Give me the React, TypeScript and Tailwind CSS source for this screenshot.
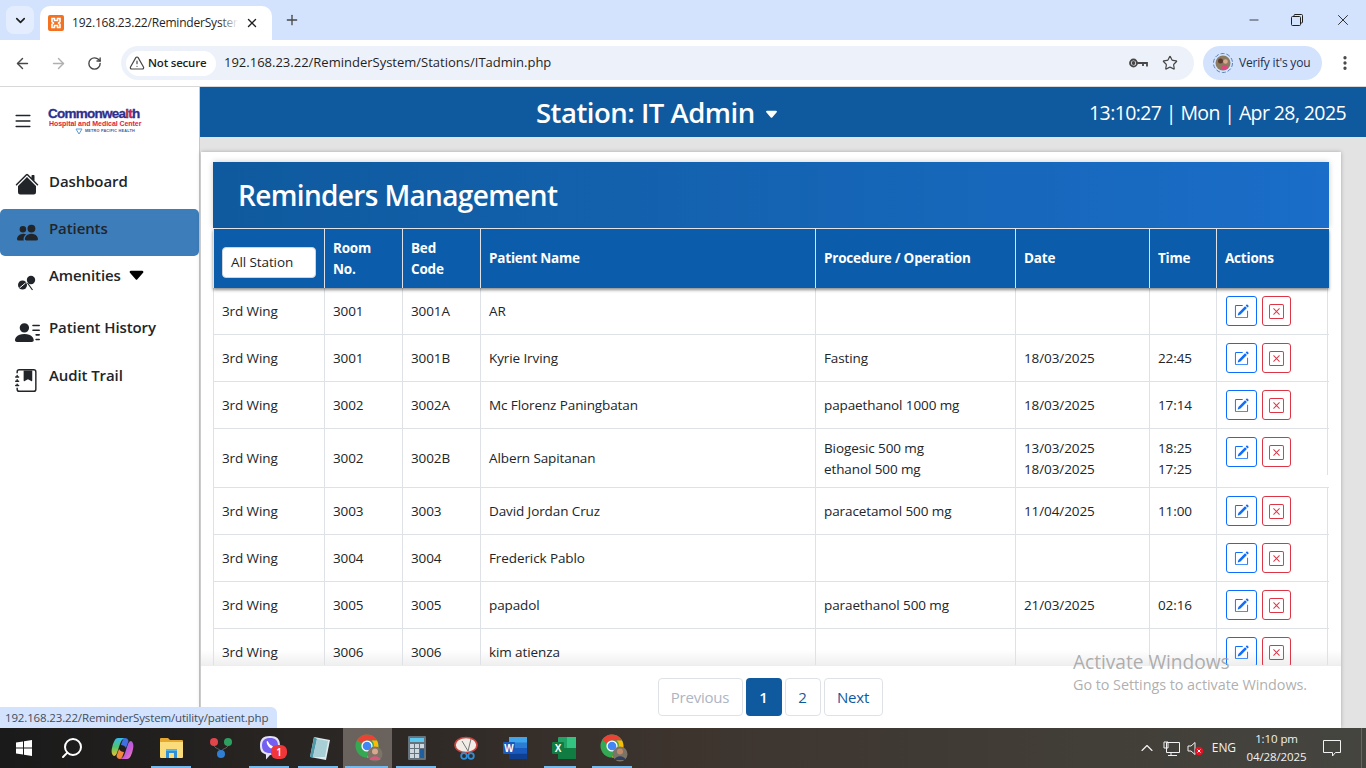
import React from "react";
import { ArrowLeft, ArrowRight, RotateCw, Star, Plus, X, ChevronDown, ChevronUp, Minus, EllipsisVertical, TriangleAlert, Search } from "lucide-react";
import { BsHouseFill, BsPeopleFill, BsPersonLinesFill, BsJournalBookmarkFill, BsCaretDownFill, BsPencilSquare, BsXSquare, BsList } from "react-icons/bs";

const font = { fontFamily: '"Open Sans","Noto Sans",sans-serif' };

type Row = { st: string; room: string; bed: string; name: string; proc: string[]; date: string[]; time: string[]; tall?: boolean };
const rows: Row[] = [
  { st: "3rd Wing", room: "3001", bed: "3001A", name: "AR", proc: [], date: [], time: [] },
  { st: "3rd Wing", room: "3001", bed: "3001B", name: "Kyrie Irving", proc: ["Fasting"], date: ["18/03/2025"], time: ["22:45"] },
  { st: "3rd Wing", room: "3002", bed: "3002A", name: "Mc Florenz Paningbatan", proc: ["papaethanol 1000 mg"], date: ["18/03/2025"], time: ["17:14"] },
  { st: "3rd Wing", room: "3002", bed: "3002B", name: "Albern Sapitanan", proc: ["Biogesic 500 mg", "ethanol 500 mg"], date: ["13/03/2025", "18/03/2025"], time: ["18:25", "17:25"], tall: true },
  { st: "3rd Wing", room: "3003", bed: "3003", name: "David Jordan Cruz", proc: ["paracetamol 500 mg"], date: ["11/04/2025"], time: ["11:00"] },
  { st: "3rd Wing", room: "3004", bed: "3004", name: "Frederick Pablo", proc: [], date: [], time: [] },
  { st: "3rd Wing", room: "3005", bed: "3005", name: "papadol", proc: ["paraethanol 500 mg"], date: ["21/03/2025"], time: ["02:16"] },
  { st: "3rd Wing", room: "3006", bed: "3006", name: "kim atienza", proc: [], date: [], time: [] },
];

function Cell({ w, children }: { w: string; children?: React.ReactNode }) {
  return <div className={`${w} shrink-0 flex flex-col justify-center pl-2 border-r border-[#dee2e6] text-[13.5px] leading-[21px] text-[#212529] tracking-[-0.1px]`}>{children}</div>;
}

function Lines({ items, tall }: { items: string[]; tall?: boolean }) {
  return <div className={tall ? "pt-[2px]" : ""}>{items.map((p) => <div key={p}>{p}</div>)}</div>;
}

function TableRow({ r }: { r: Row }) {
  return (
    <div className={`flex ${r.tall ? "h-[59px]" : "h-[47px]"} border-b border-[#dee2e6]`}>
      <Cell w="w-[111px]">{r.st}</Cell>
      <Cell w="w-[78px]">{r.room}</Cell>
      <Cell w="w-[78px]">{r.bed}</Cell>
      <Cell w="w-[335px]">{r.name}</Cell>
      <Cell w="w-[200px]"><Lines items={r.proc} tall={r.tall} /></Cell>
      <Cell w="w-[134px]"><Lines items={r.date} tall={r.tall} /></Cell>
      <Cell w="w-[67px]"><Lines items={r.time} tall={r.tall} /></Cell>
      <div className="w-[112px] h-[46px] shrink-0 flex items-start gap-[5px] pt-[8px] pl-[9px] border-l border-r border-[#dee2e6] -ml-px">
        <button className="w-[31px] h-[30px] flex items-center justify-center rounded-[3px] border border-[#0d6efd] text-[#0d6efd]"><BsPencilSquare size={15} className="mt-[1px]" /></button>
        <button className="w-[29px] h-[30px] flex items-center justify-center rounded-[3px] border border-[#dc3545] text-[#dc3545]"><BsXSquare size={15} className="mt-[1px]" /></button>
      </div>
    </div>
  );
}

function Th({ w, children }: { w: string; children: React.ReactNode }) {
  return <div className={`${w} shrink-0 flex items-center pl-2 border-r border-[#dee2e6] text-[13.5px] leading-[21px] font-bold text-white tracking-[-0.2px]`}>{children}</div>;
}

function NavItem({ icon, label, active, extra, h, labelCls = "-mt-[9px]" }: { icon: React.ReactNode; label: string; active?: boolean; extra?: React.ReactNode; h: string; labelCls?: string }) {
  return (
    <div className={`${h} flex items-center pl-[15px] ${active ? "bg-[#3d7dba] rounded-[5px]" : ""}`}>
      <span className="w-[34px] shrink-0 flex items-center text-[#212529]">{icon}</span>
      <span className={`${labelCls} text-[15px] font-semibold text-[#212529] tracking-[-0.1px]`}>{label}</span>
      {extra}
    </div>
  );
}

function TaskIcon({ children, bar, active, barCls = "left-[4px] w-[40px]" }: { children: React.ReactNode; bar?: boolean; active?: boolean; barCls?: string }) {
  return (
    <div className={`relative w-[49px] h-full flex items-center justify-center ${active ? "bg-[#6a625c]" : ""}`}>
      {children}
      {bar && <div className={`absolute bottom-0 h-[2px] ${barCls} bg-[#76b9ed]`} />}
    </div>
  );
}

function ChromeIcon({ skin, top }: { skin: string; top: string }) {
  return (
    <svg width="28" height="28" viewBox="0 0 28 28" className="ml-[3px]">
      <circle cx="12" cy="12" r="11.500" fill="#34a853" />
      <path d="M12 .5A11.500 11.500 0 0 1 22 6.500H12a5.500 5.500 0 0 0-5 3.200L2.300 6A11.500 11.500 0 0 1 12 .5z" fill="#ea4335" />
      <path d="M22 6.500A11.500 11.500 0 0 1 12 23.500l4.700-8.200a5.500 5.500 0 0 0 0-8.800z" fill="#fbbc04" />
      <circle cx="12" cy="12" r="5.600" fill="#fff" />
      <circle cx="12" cy="12" r="4.300" fill="#4285f4" />
      <circle cx="20" cy="20" r="7.500" fill="#7d7468" />
      <circle cx="20" cy="17.500" r="3" fill={skin} />
      <path d="M14.500 26c1-5 10-5 11 0z" fill={top} />
    </svg>
  );
}

export default function App() {
  return (
    <div style={font} className="relative w-[1366px] h-[768px] overflow-hidden flex flex-col bg-white">
      {/* Tab strip */}
      <div className="h-[40px] shrink-0 bg-[#d3e3fd] flex items-end">
        <div className="w-[6px]" />
        <div className="self-start mt-[6px] w-[28px] h-[28px] rounded-[8px] bg-[#e4edfd] flex items-center justify-center"><ChevronDown size={15} strokeWidth={2.6} className="text-[#1f1f1f]" /></div>
        <div className="ml-[6px] w-[232px] h-[34px] bg-white rounded-t-[10px] flex items-center pl-[8px]">
          <svg width="16" height="16" viewBox="0 0 16 16"><rect width="16" height="16" rx="2" fill="#f4711f" /><path d="M4 3.500h2.500v2h3v-2H12v3.200l-1.400 1.300L12 9.300v3.200H9.500v-2h-3v2H4V9.300L5.400 8 4 6.700z" fill="none" stroke="#fff" strokeWidth="1.600" /></svg>
          <div className="relative ml-[8px] w-[166px] overflow-hidden whitespace-nowrap text-[12px] text-[#1f1f1f] tracking-[-0.2px]">
            192.168.23.22/ReminderSystem
            <div className="absolute right-0 top-0 bottom-0 w-[18px] bg-gradient-to-r from-transparent to-white" />
          </div>
          <X size={14} strokeWidth={2.4} className="ml-[7px] text-[#1f1f1f]" />
        </div>
        <Plus size={16} strokeWidth={2} className="self-center ml-[12px] text-[#474747]" />
        <div className="flex-1" />
        <div className="self-start h-[40px] flex items-center text-[#1f1f1f]">
          <Minus size={14} strokeWidth={1.4} className="mr-[30px]" />
          <svg width="12" height="12" viewBox="0 0 12 12" className="mr-[31px]" fill="none" stroke="#1f1f1f"><rect x=".5" y="2.500" width="9" height="9" rx="1" /><path d="M3 2.500V1.500a1 1 0 0 1 1-1h6.500a1 1 0 0 1 1 1V8a1 1 0 0 1-1 1H9.500" /></svg>
          <X size={18} strokeWidth={1.2} className="mr-[14px]" />
        </div>
      </div>
      {/* Toolbar */}
      <div className="h-[47px] shrink-0 bg-white border-b border-[#d8d8d8] flex items-center">
        <ArrowLeft size={17} strokeWidth={2} className="ml-[14px] text-[#474747]" />
        <ArrowRight size={17} strokeWidth={2} className="ml-[19px] text-[#b0b0b0]" />
        <RotateCw size={15} strokeWidth={2.2} className="ml-[20px] text-[#474747]" />
        <div className="ml-[19px] w-[1073px] h-[34px] rounded-full bg-[#edf2fa] flex items-center pl-[5px]">
          <div className="h-[25px] w-[90px] rounded-full bg-white flex items-center pl-[3px] gap-[3px] text-[11.5px] font-semibold text-[#1f1f1f] tracking-[-0.2px] whitespace-nowrap">
            <TriangleAlert size={16} strokeWidth={1.8} className="text-[#474747]" />Not secure
          </div>
          <span className="ml-[8px] text-[13px] text-[#1f1f1f]">192.168.23.22/ReminderSystem/Stations/ITadmin.php</span>
          <div className="flex-1" />
          <svg width="19" height="12" viewBox="0 0 19 12" fill="none" stroke="#474747" strokeWidth="1.800"><circle cx="4.500" cy="6" r="3.500" /><path d="M8 6h10v3.500M14 6v3" /><circle cx="4.500" cy="6" r="1" fill="#474747" /></svg>
          <Star size={16} strokeWidth={1.8} className="ml-[14px] mr-[16px] text-[#474747]" />
        </div>
        <div className="ml-[9px] w-[119px] h-[34px] rounded-full bg-[#d3e3fd] flex items-center pl-[10px]">
          <svg width="20" height="20" viewBox="0 0 20 20"><circle cx="10" cy="10" r="9.500" fill="none" stroke="#5b7fb8" strokeDasharray="4 2" /><circle cx="10" cy="10" r="7.500" fill="#8a7a60" /><circle cx="7.500" cy="8" r="2.500" fill="#5b3a30" /><circle cx="12.500" cy="8.500" r="2.300" fill="#d6a88c" /><path d="M9 17v-5h5v4z" fill="#d9487c" /></svg>
          <span className="ml-[6px] text-[12px] text-[#1f2f4f] tracking-[-0.2px]">Verify it's you</span>
        </div>
        <EllipsisVertical size={18} strokeWidth={2.4} className="ml-[14px] text-[#474747]" />
      </div>
      {/* Body */}
      <div className="flex-1 flex min-h-0">
        <aside className="w-[200px] shrink-0 bg-white border-r border-[#c8c8c8]">
          <div className="h-[70px] flex items-center pl-[12px]">
            <BsList size={22} className="text-[#212529] shrink-0 -mt-[2px]" />
            <div className="ml-[14px] -mt-[1px] flex flex-col items-start" style={{ fontFamily: '"Liberation Sans",sans-serif' }}>
              <span className="text-[13.5px] leading-[12px] font-bold text-[#2e2f8f] tracking-[-0.75px] whitespace-nowrap" style={{ WebkitTextStroke: "0.3px #2e2f8f" }}>Commonwea<span className="text-[#e0233c]">lt</span>h</span>
              <span className="ml-[1px] text-[7px] leading-[7px] font-bold text-[#e0233c] tracking-[-0.05px] whitespace-nowrap">Hospital and Medical Center</span>
              <div className="ml-[27px] flex items-center gap-[2px] h-[8px]">
                <svg width="8" height="7" viewBox="0 0 8 7" fill="none" stroke="#5aa0d8"><path d="M1 1h6L4 6z" /></svg>
                <span className="text-[3.800px] leading-[7px] font-bold text-[#3a5a9a] whitespace-nowrap tracking-[0.2px]">METRO PACIFIC HEALTH</span>
              </div>
            </div>
          </div>
          <NavItem h="h-[52px]" labelCls="-mt-[3px]" icon={<BsHouseFill size={24} className="mt-[2px]" />} label="Dashboard" />
          <NavItem h="h-[47px]" active icon={<BsPeopleFill size={21} className="ml-[2px]" />} label="Patients" />
          <NavItem h="h-[47px]" icon={
            <svg width="20" height="16" viewBox="0 0 20 16" className="ml-[2px] mt-[6px]">
              <circle cx="14" cy="5" r="4.200" fill="#212529" />
              <circle cx="5.500" cy="10" r="4.500" fill="#212529" />
              <path d="M2.500 13l6-5M10 8.500l4 6" stroke="#fff" strokeWidth="1" />
              <path d="M10.500 8l5 7" stroke="#212529" strokeWidth="1.200" />
            </svg>
          } label="Amenities" extra={<BsCaretDownFill size={19} className="ml-[6px] -mt-[8px]" />} />
          <NavItem h="h-[58px]" icon={<BsPersonLinesFill size={25} />} label="Patient History" />
          <NavItem h="h-[38px]" icon={<BsJournalBookmarkFill size={23} />} label="Audit Trail" />
        </aside>
        <main className="flex-1 min-w-0 bg-[#e3e3e3] flex flex-col">
          <header className="h-[50px] shrink-0 bg-[#0f5a9e] flex items-center text-white">
            <div className="ml-[336px] flex items-center mt-[2px]">
              <span className="text-[27.5px] font-semibold tracking-[-0.5px] whitespace-nowrap">Station: IT Admin</span>
              <BsCaretDownFill size={15} className="ml-[9px] mt-[2px]" />
            </div>
            <span className="ml-auto mr-[20px] mt-[2px] text-[19.5px] tracking-[-0.6px] whitespace-nowrap">13:10:27 | Mon | Apr 28, 2025</span>
          </header>
          <div className="flex-1 min-h-0 mt-[15px] ml-[1px] mr-[25px] bg-white shadow-[0_0_4px_rgba(0,0,0,0.25)] flex flex-col">
            <div className="flex-1 min-h-0 pt-[10px] pl-[12px] pr-[12px] overflow-hidden relative">
              <div className="h-[66px] bg-gradient-to-r from-[#0f5a9e] to-[#1a6dc8] flex items-center pl-[25px] shadow-[0_0_6px_rgba(0,0,0,0.2)]">
                <h1 className="text-[28px] font-semibold text-white tracking-[-0.65px]">Reminders Management</h1>
              </div>
              <div className="mt-px h-[59px] flex bg-[#0b5cab] shadow-[0_2px_3px_rgba(0,0,0,0.45)] border-l border-[#dee2e6] relative z-20">
                <div className="w-[111px] shrink-0 flex items-center pl-[8px] pt-[7px] border-r border-[#dee2e6]">
                  <div className="w-[94px] h-[31px] bg-white rounded-[4px] border border-[#ced4da] flex items-center pl-[8px] text-[13.5px] text-[#212529] tracking-[-0.1px]">All Station</div>
                </div>
                <Th w="w-[78px]"><span>Room<br />No.</span></Th>
                <Th w="w-[78px]"><span>Bed<br />Code</span></Th>
                <Th w="w-[335px]">Patient Name</Th>
                <Th w="w-[200px]">Procedure / Operation</Th>
                <Th w="w-[134px]">Date</Th>
                <Th w="w-[67px]">Time</Th>
                <div className="flex-1 flex items-center pl-2 text-[13.5px] font-bold text-white tracking-[-0.2px]">Actions</div>
              </div>
              <div className="relative z-10 border-l border-[#dee2e6]">
                {rows.map((r) => <TableRow key={r.name} r={r} />)}
              </div>
            </div>
            <footer className="h-[63px] shrink-0 bg-white border-t border-[#dcdcdc] flex items-start justify-center pt-[12px] pr-[2px] relative">
              <div className="absolute z-0 left-0 right-0 -top-[16px] h-[16px] bg-gradient-to-b from-transparent to-[#eeeeee]" />
              <div className="flex gap-[3px] text-[15px]">
                <div className="w-[85px] h-[38px] border border-[#dee2e6] rounded-[4px] flex items-center justify-center text-[#adb5c2] tracking-[-0.2px]">Previous</div>
                <div className="w-[36px] h-[38px] bg-[#0f5a9e] rounded-[4px] flex items-center justify-center text-white font-semibold">1</div>
                <div className="w-[36px] h-[38px] border border-[#dee2e6] rounded-[4px] flex items-center justify-center text-[#0f5a9e]">2</div>
                <div className="w-[59px] h-[38px] border border-[#dee2e6] rounded-[4px] flex items-center justify-center text-[#0f5a9e] tracking-[-0.2px]">Next</div>
              </div>
            </footer>
          </div>
        </main>
      </div>
      {/* Taskbar */}
      <div className="h-[40px] shrink-0 bg-gradient-to-r from-[#1a1a1a] via-[#3d342e] to-[#45453f] flex items-stretch text-white">
        <div className="w-[47px] flex items-center justify-center">
          <svg width="16" height="16" viewBox="0 0 16 16" fill="#fff"><path d="M0 2.500l7-1v6H0zM8 1.300L16 0v7.500H8zM0 8.500h7v6l-7-1zM8 8.500h8V16l-8-1.300z" /></svg>
        </div>
        <div className="w-[49px] flex items-center justify-center"><Search size={24} strokeWidth={2} className="-scale-x-100" /></div>
        <div className="w-[2px]" />
        <TaskIcon>
          <svg width="23" height="23" viewBox="0 0 23 23">
            <defs>
              <linearGradient id="cp1" x1="0" y1="0" x2="0" y2="1"><stop offset="0" stopColor="#35b8ee" /><stop offset=".5" stopColor="#4fc46a" /><stop offset="1" stopColor="#f4c22e" /></linearGradient>
              <linearGradient id="cp2" x1="0" y1="0" x2="1" y2="1"><stop offset="0" stopColor="#7a6cf0" /><stop offset=".6" stopColor="#c95ad6" /><stop offset="1" stopColor="#f08ab0" /></linearGradient>
            </defs>
            <path d="M7 1h7c-3 1-4 3-5 6l-3 9c-.7 2-2 3-3 3-2-1-3-4-2-8 1-5 3-10 6-10z" fill="url(#cp1)" />
            <path d="M16 22H9c3-1 4-3 5-6l3-9c.7-2 2-3 3-3 2 1 3 4 2 8-1 5-3 10-6 10z" fill="url(#cp2)" />
            <path d="M14 1c2 0 3 1 3.500 3L15 11c-1-2-3-3-5-3 1-3 2-7 4-7z" fill="#3f6fe0" />
            <path d="M9 22c-2 0-3-1-3.500-3L8 12c1 2 3 3 5 3-1 3-2 7-4 7z" fill="#f2873c" />
          </svg>
        </TaskIcon>
        <TaskIcon bar>
          <svg width="23" height="20" viewBox="0 0 23 20"><path d="M0 1a1 1 0 0 1 1-1h7l2 2h12a1 1 0 0 1 1 1v16H0z" fill="#e6a82e" /><path d="M0 4h23v15a1 1 0 0 1-1 1H1a1 1 0 0 1-1-1z" fill="#fbdc7a" /><path d="M6 11h11v9h-3v-5H9v5H6z" fill="#2f8fd6" /><path d="M6 11h11v2H6z" fill="#56b4ea" /></svg>
        </TaskIcon>
        <TaskIcon>
          <svg width="24" height="22" viewBox="0 0 24 22"><path d="M5 8c0 4 7 3 7 8M19 8c0 4-7 3-7 8" stroke="#666" fill="none" /><circle cx="5" cy="5" r="4" fill="#e2454a" /><circle cx="19" cy="5" r="4" fill="#2da060" /><circle cx="12" cy="17" r="4" fill="#2f7fd6" /></svg>
        </TaskIcon>
        <TaskIcon bar>
          <svg width="24" height="26" viewBox="0 0 24 26"><path d="M12 1c7 0 10 3 10 9.500S19 20 12 20l-4 4.500V19.500C3 18 2 15 2 10.500 2 4 5 1 12 1z" fill="#e7e3f7" /><path d="M12 3c5.500 0 8 2.500 8 7.500S17.500 18 12 18c-5.500 0-8-2.500-8-7.500S6.500 3 12 3z" fill="#7360f2" /><path d="M9 6c1.500 0 1.500 2 2.500 3s2 1.500 3.500 2.500c0 2-2 2.500-3.500 1S8 8 9 6z" fill="#fff" /></svg>
          <span className="absolute left-[26px] top-[17px] w-[16px] h-[14px] rounded-[6px] bg-[#f0353b] text-[10px] leading-[14px] text-center font-semibold">1</span>
        </TaskIcon>
        <TaskIcon bar>
          <svg width="24" height="24" viewBox="0 0 24 24"><path d="M7 1l16 3-4 20-16-3z" fill="#dfe9ee" /><path d="M7 1l3 2-4 18-3 0z" fill="#4f9aa8" /><path d="M10 3l11 2-3 16L6 21z" fill="#a8cfd6" /></svg>
        </TaskIcon>
        <TaskIcon bar active barCls="left-[2px] w-[43px]"><ChromeIcon skin="#d6a88c" top="#d9587c" /></TaskIcon>
        <TaskIcon bar>
          <svg width="18" height="24" viewBox="0 0 18 24"><rect width="18" height="24" rx="1" fill="#66727c" /><rect x="2" y="2" width="14" height="4" fill="#5cc8ee" /><path d="M2 8h4v4H2zM7 8h4v4H7zM2 13h4v4H2zM7 13h4v4H7zM2 18h4v4H2zM7 18h4v4H7z" fill="#cfd8de" /><rect x="12" y="8" width="4" height="4" fill="#cfd8de" /><rect x="12" y="13" width="4" height="9" fill="#1f5f9e" /></svg>
        </TaskIcon>
        <TaskIcon>
          <svg width="24" height="24" viewBox="0 0 24 24"><ellipse cx="12" cy="9" rx="11" ry="7.500" fill="#f1ece6" stroke="#c9433f" strokeWidth="1.600" /><path d="M8 5l6 10M17 3l-3 12" stroke="#777" strokeWidth="1" /><circle cx="17" cy="20" r="2.800" fill="none" stroke="#2f8fd6" strokeWidth="1.800" /><circle cx="10" cy="20" r="2.800" fill="none" stroke="#2f8fd6" strokeWidth="1.800" /></svg>
        </TaskIcon>
        <TaskIcon>
          <svg width="24" height="22" viewBox="0 0 24 22"><rect x="6" width="18" height="22" rx="1" fill="#2b7cd3" /><rect x="6" width="18" height="5.500" fill="#41a5ee" /><rect x="6" y="11" width="18" height="5.500" fill="#185abd" /><rect x="6" y="16.500" width="18" height="5.500" fill="#103f91" /><rect y="5" width="12" height="12" rx="1" fill="#185abd" /><text x="6" y="14.500" textAnchor="middle" fontSize="10" fontWeight="700" fill="#fff" fontFamily="Liberation Sans">W</text></svg>
        </TaskIcon>
        <TaskIcon bar barCls="left-[5px] w-[32px]">
          <svg width="24" height="22" viewBox="0 0 24 22"><rect x="6" width="18" height="22" rx="1" fill="#21a366" /><rect x="6" y="11" width="18" height="11" fill="#107c41" /><rect x="15" width="9" height="11" fill="#33c481" /><rect y="5" width="12" height="12" rx="1" fill="#107c41" /><text x="6" y="14.500" textAnchor="middle" fontSize="10" fontWeight="700" fill="#fff" fontFamily="Liberation Sans">X</text></svg>
        </TaskIcon>
        <TaskIcon bar><ChromeIcon skin="#c08a68" top="#2f3f5f" /></TaskIcon>
        <div className="flex-1" />
        <div className="flex items-center text-[#f2f2f2]">
          <ChevronUp size={20} strokeWidth={1.4} className="mr-[6px]" />
          <svg width="17" height="15" viewBox="0 0 17 15" fill="none" stroke="#f2f2f2" className="mr-[7px]"><path d="M3.500 1.500h13v10h-13zM1 1h4v6H1zM8 11.500v2.500M5 14.500h9" /></svg>
          <svg width="18" height="15" viewBox="0 0 18 15" className="mr-[7px]"><path d="M1 5h3l4-3.500v12L4 10H1z" fill="none" stroke="#f2f2f2" /><circle cx="12" cy="10" r="4.200" fill="#e81123" /><path d="M10.500 8.500l3 3m0-3l-3 3" stroke="#fff" /></svg>
          <span className="text-[12px] mr-[5px] tracking-[-0.1px]">ENG</span>
          <div className="w-[71px] text-center text-[11.5px] leading-[18px] tracking-[-0.1px]"><div>1:10 pm</div><div>04/28/2025</div></div>
          <svg width="18" height="17" viewBox="0 0 18 17" fill="none" stroke="#f2f2f2" className="ml-[11px] mr-[20px]"><path d="M.5.5h17v12h-5l-3 3.500v-3.500H.5z" /></svg>
          <div className="w-[1px] h-full bg-[#666]" /><div className="w-[4px]" />
        </div>
      </div>
      {/* Overlays */}
      <div className="absolute left-0 top-[707px] h-[21px] w-[277px] bg-[#d3e3fd] rounded-tr-[6px] flex items-center pl-[5px] text-[11.5px] text-[#444c5c] tracking-[-0.15px] whitespace-nowrap">192.168.23.22/ReminderSystem/utility/patient.php</div>
      <div className="absolute z-30 left-[1073px] top-[650px] text-[#9a9a9a]/80 pointer-events-none">
        <div className="text-[19.2px] leading-[24px] tracking-[-0.05px]">Activate Windows</div>
        <div className="text-[14.4px] leading-[22px] tracking-[-0.05px]">Go to Settings to activate Windows.</div>
      </div>
    </div>
  );
}
